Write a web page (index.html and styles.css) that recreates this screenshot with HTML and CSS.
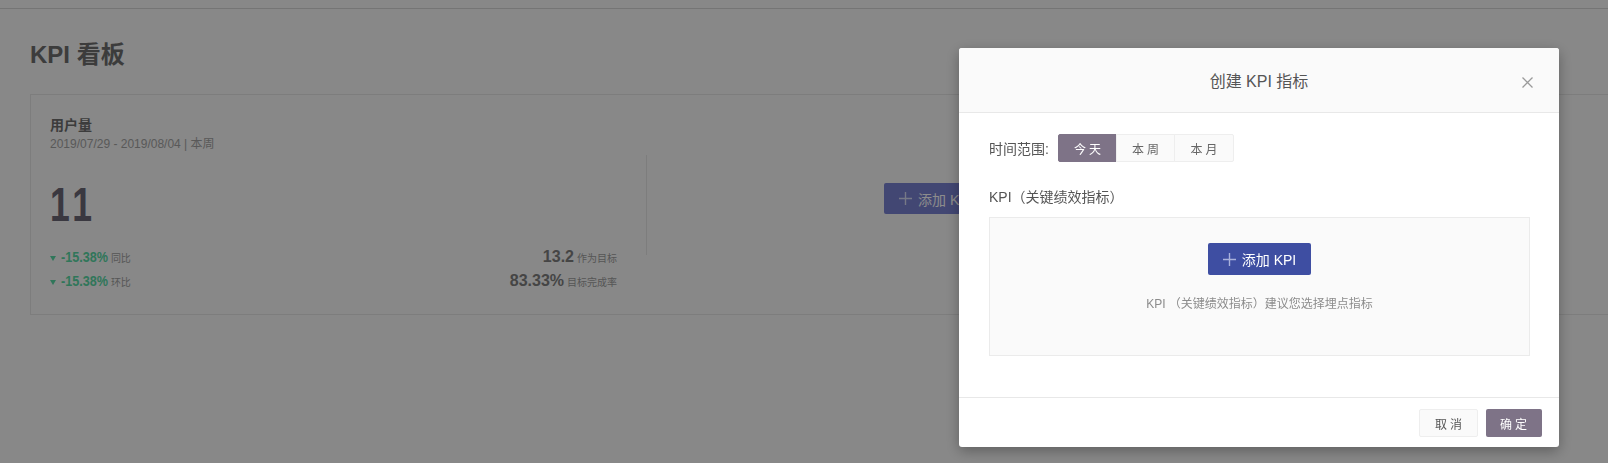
FILE: index.html
```html
<!DOCTYPE html>
<html lang="zh-CN">
<head>
<meta charset="utf-8">
<title>KPI 看板</title>
<link rel="stylesheet" href="styles.css">
</head>
<body>
<div class="topbar"></div>
<main class="page">
  <h1 class="page-title">KPI 看板</h1>
  <section class="card">
    <div class="metric">
      <div class="metric-name">用户量</div>
      <div class="metric-range">2019/07/29 - 2019/08/04 | 本周</div>
      <div class="metric-value"><span class="narrow">11</span></div>
      <div class="metric-row">
        <span class="change"><i class="tri"></i><b class="change-num">-15.38%</b><span class="lbl">同比</span></span>
        <span class="goal"><b class="goal-num">13.2</b><span class="lbl">作为目标</span></span>
      </div>
      <div class="metric-row">
        <span class="change"><i class="tri"></i><b class="change-num">-15.38%</b><span class="lbl">环比</span></span>
        <span class="goal"><b class="goal-num">83.33%</b><span class="lbl">目标完成率</span></span>
      </div>
    </div>
    <div class="metric-side">
      <button class="btn-add btn-add--page" type="button">
        <svg class="plus" width="13" height="13" viewBox="0 0 13 13"><path d="M6.5 0V13M0 6.5H13" stroke="currentColor" stroke-width="1.4" fill="none"/></svg>
        <span>添加 KPI</span>
      </button>
    </div>
  </section>
</main>

<div class="mask"></div>

<div class="modal">
  <header class="modal-head">
    <span class="modal-title">创建 KPI 指标</span>
    <svg class="modal-close" width="11" height="11" viewBox="0 0 11 11"><path d="M0.5 0.5L10.5 10.5M10.5 0.5L0.5 10.5" stroke="currentColor" stroke-width="1.3" fill="none"/></svg>
  </header>
  <div class="modal-body">
    <div class="range-row">
      <span class="range-label">时间范围:</span>
      <div class="seg-group">
        <span class="seg seg--active">今天</span>
        <span class="seg">本周</span>
        <span class="seg">本月</span>
      </div>
    </div>
    <div class="kpi-label">KPI（关键绩效指标）</div>
    <div class="kpi-box">
      <button class="btn-add" type="button">
        <svg class="plus" width="13" height="13" viewBox="0 0 13 13"><path d="M6.5 0V13M0 6.5H13" stroke="currentColor" stroke-width="1.4" fill="none"/></svg>
        <span>添加 KPI</span>
      </button>
      <p class="kpi-hint">KPI （关键绩效指标）建议您选择埋点指标</p>
    </div>
  </div>
  <footer class="modal-foot">
    <button class="btn btn-cancel" type="button">取消</button>
    <button class="btn btn-ok" type="button">确定</button>
  </footer>
</div>
</body>
</html>
```

FILE: styles.css
```css
* { box-sizing: border-box; }

html, body {
  margin: 0;
  padding: 0;
  width: 1608px;
  height: 463px;
  overflow: hidden;
}

body {
  background: #f7f7f7;
  font-family: "Liberation Sans", "Noto Sans CJK SC", sans-serif;
  color: #6b6b6b;
}

.topbar {
  height: 9px;
  background: #f7f7f7;
  border-bottom: 1px solid #d6d6d6;
}

.page {
  padding: 30px 0 0 30px;
}

.page-title {
  margin: 0;
  font-size: 24px;
  line-height: 32px;
  font-weight: 600;
  color: #6e6e6e;
}

.card {
  margin-top: 23px;
  margin-right: -10px;
  height: 221px;
  border: 1px solid #e4e4e4;
  display: flex;
  align-items: flex-start;
}

.metric {
  width: 615px;
  flex: none;
  padding: 20px 29px 0 19px;
}

.metric-name {
  font-size: 14px;
  line-height: 20px;
  font-weight: 600;
  color: #6e6e6e;
}

.metric-range {
  font-size: 12px;
  line-height: 18px;
  color: #a3a3a3;
}

.metric-value {
  margin-top: 28px;
  height: 47px;
  font-size: 48px;
  line-height: 47px;
  font-weight: 700;
  color: #6a6675;
}

.narrow {
  display: inline-block;
  transform: scaleX(0.74);
  transform-origin: left center;
  letter-spacing: 6px;
}

.metric-row {
  height: 24px;
  display: flex;
  justify-content: space-between;
  align-items: baseline;
  line-height: 24px;
}

.metric-value + .metric-row { margin-top: 17px; }

.change {
  display: flex;
  align-items: baseline;
}

.tri {
  display: inline-block;
  width: 0;
  height: 0;
  border-left: 3px solid transparent;
  border-right: 3px solid transparent;
  border-top: 5px solid #58d8a4;
  margin-right: 5px;
  position: relative;
  top: -1px;
}

.change-num {
  display: inline-block;
  font-size: 15px;
  font-weight: 700;
  color: #58d8a4;
  transform: scaleX(0.84);
  transform-origin: left center;
  margin-right: -9px;
}

.lbl {
  margin-left: 3px;
  font-size: 10px;
  color: #9d9d9d;
}

.goal {
  display: flex;
  align-items: baseline;
}

.goal-num {
  font-size: 16px;
  font-weight: 700;
  color: #7e7e7e;
}

.metric-side {
  margin-top: 60px;
  height: 100px;
  flex: 1;
  border-left: 1px solid #e4e4e4;
  padding: 28px 0 0 237px;
}

.btn-add {
  display: inline-flex;
  align-items: center;
  height: 32px;
  padding: 0 15px;
  border: 0;
  border-radius: 2px;
  background: #3e4ea2;
  color: #fff;
  font-family: inherit;
  font-size: 14px;
  cursor: pointer;
}

.btn-add .plus {
  color: #a9b1dc;
  margin-right: 6px;
}

.btn-add--page {
  height: 31px;
  background: #7981d2;
}

.btn-add--page .plus { color: #d8dcf4; }

.mask {
  position: fixed;
  inset: 0;
  background: rgba(0, 0, 0, 0.45);
}

.modal {
  position: fixed;
  top: 48px;
  left: 959px;
  width: 600px;
  height: 399px;
  background: #fff;
  border-radius: 3px;
  box-shadow: 0 4px 14px rgba(0, 0, 0, 0.3);
  display: flex;
  flex-direction: column;
  overflow: hidden;
}

.modal-head {
  position: relative;
  height: 65px;
  flex: none;
  background: #fafafa;
  border-bottom: 1px solid #e8e8e8;
  display: flex;
  align-items: center;
  justify-content: center;
}

.modal-title {
  font-size: 16px;
  color: #555;
}

.modal-close {
  position: absolute;
  right: 26px;
  top: 29px;
  color: #9a9a9a;
}

.modal-body {
  flex: 1;
  padding: 21px 29px 0 30px;
}

.range-row {
  display: flex;
  align-items: center;
  height: 28px;
}

.range-label {
  font-size: 14px;
  color: #555;
  margin-right: 9px;
}

.seg-group {
  display: flex;
}

.seg {
  width: 59px;
  height: 28px;
  display: flex;
  align-items: center;
  justify-content: center;
  padding-left: 3px;
  font-size: 12px;
  letter-spacing: 3px;
  color: #666;
  background: #fafafa;
  border: 1px solid #eee;
  margin-left: -1px;
}

.seg:first-child { margin-left: 0; border-radius: 2px 0 0 2px; }
.seg:last-child { border-radius: 0 2px 2px 0; width: 60px; }

.seg--active {
  background: #7e7387;
  border-color: #7e7387;
  color: #fff;
}

.kpi-label {
  margin-top: 25px;
  font-size: 14px;
  line-height: 20px;
  color: #555;
}

.kpi-box {
  margin-top: 10px;
  height: 139px;
  background: #fafafa;
  border: 1px solid #ebebeb;
  display: flex;
  flex-direction: column;
  align-items: center;
  padding-top: 25px;
}

.kpi-hint {
  margin: 20px 0 0;
  font-size: 12px;
  line-height: 18px;
  color: #8c8c8c;
}

.modal-foot {
  flex: none;
  height: 50px;
  border-top: 1px solid #e8e8e8;
  display: flex;
  justify-content: flex-end;
  align-items: flex-start;
  padding: 11px 17px 0 0;
  gap: 8px;
}

.btn {
  height: 28px;
  font-family: inherit;
  font-size: 12px;
  letter-spacing: 3px;
  border-radius: 2px;
  cursor: pointer;
}

.btn-cancel {
  padding: 0 12px 0 15px;
  background: #fafafa;
  border: 1px solid #eee;
  color: #555;
}

.btn-ok {
  padding: 0 12px 0 14px;
  background: #7e7387;
  border: 0;
  color: #fff;
}
```
